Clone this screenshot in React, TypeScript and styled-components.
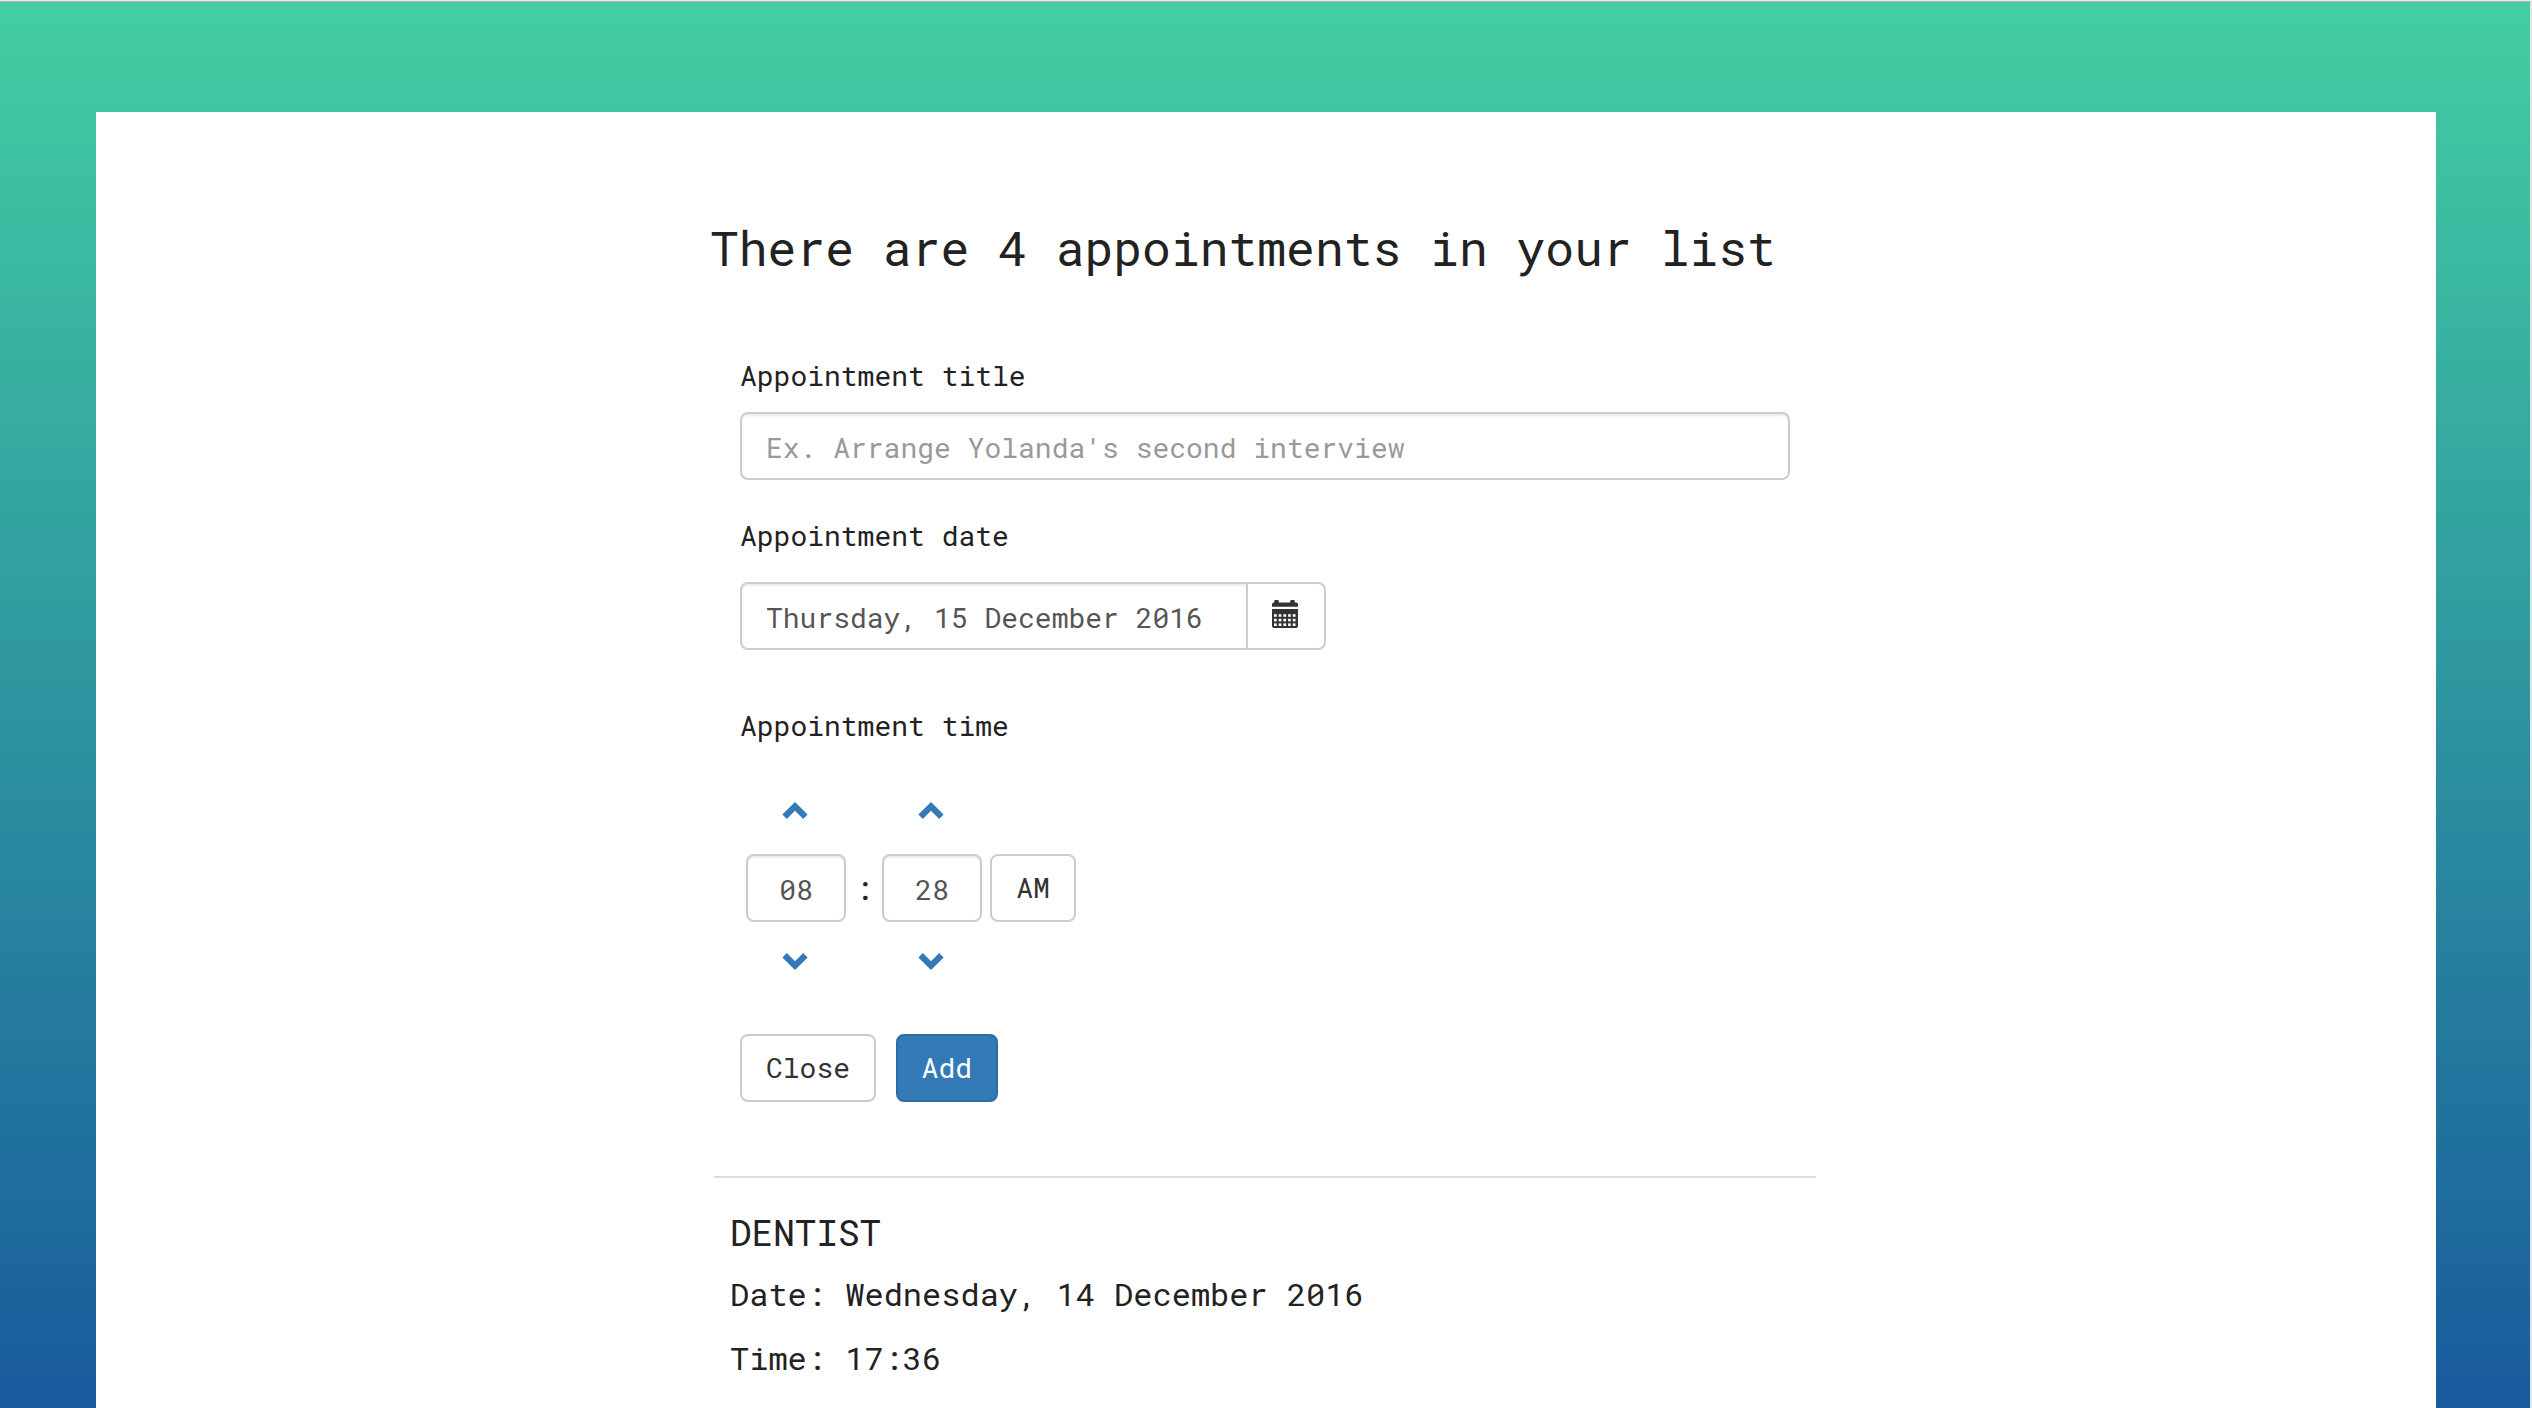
import React from "react";
import styled, { createGlobalStyle, css } from "styled-components";

const GlobalStyle = createGlobalStyle`
  * { box-sizing: border-box; }
  body {
    margin: 0;
    overflow: hidden;
    color: #222;
    font-family: "Roboto Mono", "DejaVu Sans Mono", monospace;
    font-size: 28px;
    line-height: 40px;
  }
`;

const Page = styled.div`
  display: flex;
  flex-direction: column;
  height: 100vh;
  border-top: 1px solid #e9e9e9;
  border-right: 2px solid #e4e4e4;
`;

const Backdrop = styled.div`
  flex: 1;
  display: flex;
  padding: 110px 94px 0 96px;
  border-top: 1px solid #b4b4b4;
  background: linear-gradient(to bottom, #43cea2, #185a9d);
`;

const Panel = styled.main`
  flex: 1;
  padding: 110px 618px 0;
  background: #fff;
`;

const Title = styled.h1`
  margin: 0 0 0 -4px;
  font-size: 48px;
  line-height: 52px;
  font-weight: 400;
  white-space: nowrap;
`;

const Form = styled.form`
  display: flex;
  flex-direction: column;
  align-items: flex-start;
  width: 1102px;
  padding: 82px 26px 74px;
  border-bottom: 2px solid #ddd;
`;

const Label = styled.label<{ $gap: number }>`
  margin-bottom: ${(p) => p.$gap}px;
`;

const box = css`
  height: 68px;
  border: 2px solid #ccc;
  border-radius: 8px;
  background: #fff;
  font: inherit;
`;

const TextField = styled.input`
  ${box}
  width: 100%;
  padding: 2px 24px 0;
  color: #555;
  outline: none;
  box-shadow: inset 0 2px 2px rgba(0, 0, 0, 0.075);
  &::placeholder { color: #999; opacity: 1; }
`;

const TitleField = styled(TextField)`
  margin-bottom: 36px;
`;

const DateGroup = styled.div`
  display: flex;
  width: 586px;
  margin-bottom: 56px;
`;

const DateField = styled(TextField)`
  width: 508px;
  border-radius: 8px 0 0 8px;
`;

const Button = styled.button<{ $primary?: boolean }>`
  ${box}
  padding: 0 24px;
  color: ${(p) => (p.$primary ? "#fff" : "#333")};
  background: ${(p) => (p.$primary ? "#337ab7" : "#fff")};
  border-color: ${(p) => (p.$primary ? "#2e6da4" : "#ccc")};
`;

const CalendarButton = styled(Button)`
  display: flex;
  width: 80px;
  margin-left: -2px;
  padding: 16px 0 0 24px;
  border-radius: 0 8px 8px 0;
`;

const TimePicker = styled.div`
  display: grid;
  grid-template-columns: 100px 36px 100px 94px;
  grid-template-rows: 68px 68px 68px;
  align-items: center;
  justify-items: center;
  margin: 0 0 44px 6px;
`;

const TimeField = styled(TextField)`
  padding: 2px 0 0;
  text-align: center;
`;

const Colon = styled.span`
  font-size: 32px;
`;

const Meridian = styled(Button)`
  width: 86px;
  padding: 0;
  justify-self: end;
`;

const Step = styled.button<{ $down?: boolean }>`
  display: flex;
  padding: ${(p) => (p.$down ? "11px 2px 0 0" : "0 2px 19px 0")};
  border: 0;
  background: none;
  color: #337ab7;
`;

const Actions = styled.div`
  display: flex;
  gap: 19.6px;
`;

const Entry = styled.article`
  padding: 30px 16px 0;
`;

const EntryTitle = styled.h2`
  margin: 0 0 6px;
  font-size: 36px;
  line-height: 48px;
  font-weight: 400;
`;

const EntryLine = styled.p`
  margin: 0;
  font-size: 32px;
  line-height: 64px;
`;

const Chevron = ({ down }: { down?: boolean }) => (
  <svg width="26" height="17" viewBox="0 0 26 17" fill="currentColor">
    <path
      d={
        down
          ? "M0.4 4.5 4.8 0 13 8.3 21.2 0 25.6 4.5 13 17Z"
          : "M0.4 12.5 13 0 25.6 12.5 21.2 17 13 8.7 4.8 17Z"
      }
    />
  </svg>
);

const columns = [2, 6.7, 11.4, 16.1, 20.8];
const rows = [14.2, 18.8, 23.4];

const Calendar = () => (
  <svg width="26" height="28" viewBox="0 0 26 28">
    <path
      fill="#333"
      d="M0 6.8V3.8L1.4 2.4H2.2V1.4Q2.2 0 3.6 0H5.4Q6.8 0 6.8 1.4V2.4H18.2V1.4Q18.2 0 19.6 0H21.4Q22.8 0 22.8 1.4V2.4H24.6L26 3.8V6.8ZM0 9H26V26.6L24.6 28H1.4L0 26.6Z"
    />
    {rows.map((y) =>
      columns.map((x) => <rect key={`${x}-${y}`} x={x} y={y} width="2.7" height="2.6" fill="#fff" />)
    )}
  </svg>
);

const noop = () => {};

export default function App() {
  return (
    <>
      <GlobalStyle />
      <Page>
        <Backdrop>
          <Panel>
            <Title>There are 4 appointments in your list</Title>
            <Form onSubmit={(e) => e.preventDefault()}>
              <Label $gap={16}>Appointment title</Label>
              <TitleField placeholder="Ex. Arrange Yolanda's second interview" />

              <Label $gap={26}>Appointment date</Label>
              <DateGroup>
                <DateField value="Thursday, 15 December 2016" onChange={noop} />
                <CalendarButton type="button" aria-label="Open calendar">
                  <Calendar />
                </CalendarButton>
              </DateGroup>

              <Label $gap={40}>Appointment time</Label>
              <TimePicker>
                <Step type="button"><Chevron /></Step>
                <span />
                <Step type="button"><Chevron /></Step>
                <span />
                <TimeField value="08" onChange={noop} />
                <Colon>:</Colon>
                <TimeField value="28" onChange={noop} />
                <Meridian type="button">AM</Meridian>
                <Step type="button" $down><Chevron down /></Step>
                <span />
                <Step type="button" $down><Chevron down /></Step>
                <span />
              </TimePicker>

              <Actions>
                <Button type="button">Close</Button>
                <Button type="submit" $primary>Add</Button>
              </Actions>
            </Form>
            <Entry>
              <EntryTitle>DENTIST</EntryTitle>
              <EntryLine>Date: Wednesday, 14 December 2016</EntryLine>
              <EntryLine>Time: 17:36</EntryLine>
            </Entry>
          </Panel>
        </Backdrop>
      </Page>
    </>
  );
}
